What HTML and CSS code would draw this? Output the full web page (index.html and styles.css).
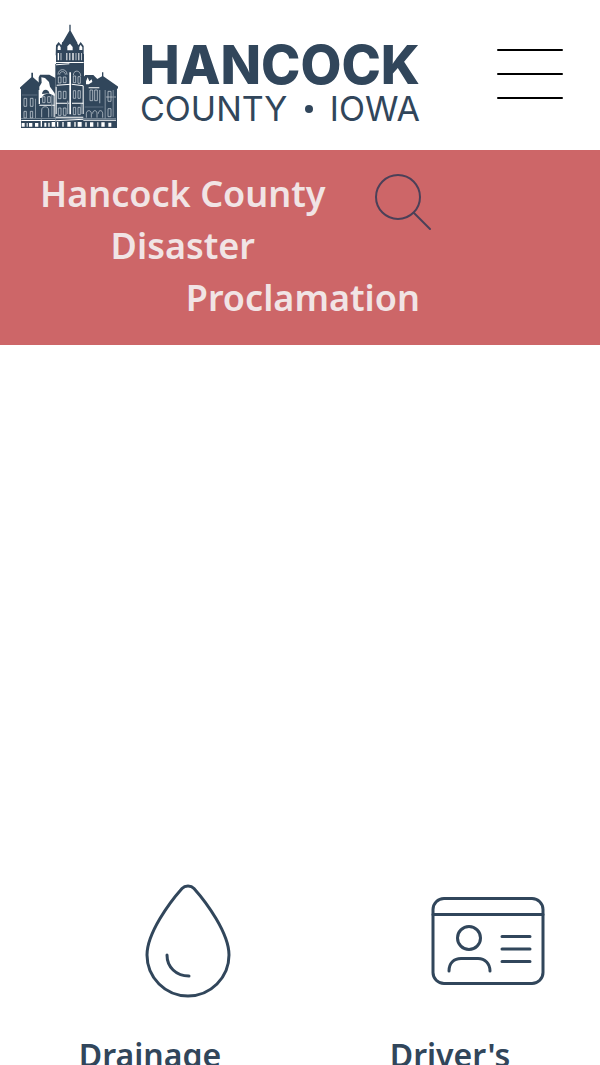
FILE: index.html
```html
<!DOCTYPE html>
<html lang="en">
<head>
<meta charset="utf-8">
<meta name="viewport" content="width=device-width, initial-scale=1">
<title>Hancock County, Iowa</title>
<link rel="stylesheet" href="styles.css">
</head>
<body>
<header class="site-header">
  <a class="brand" href="#" aria-label="Hancock County Iowa">
    <svg class="courthouse" viewBox="30 28 294 312" aria-hidden="true">
      <g fill="#31465b">
        <path d="M178 30h4v18l20 36-8 10h-28l-9-10 21-36z"/>
        <path d="M138 92l8-10 8 10 3-10h43l5 10 7-10 9 12v28h-84z"/>
        <path d="M138 118h84v50h-84z"/>
        <path d="M136 148l44-4 42 8v188h-86z"/>
        <path d="M28 220l36-32v-14h5v14l20 18v134H33V224z"/>
        <path d="M86 212v-24l4-8h28l18 10v150H86z"/>
        <path d="M220 188l6-7h24l12 12 14-8v-12h4v12l46 32-5 7v116H220z"/>
      </g>
      <g fill="#fff">
        <path d="M88 216l7-12-1-16 11 2 12 12 3 14 14 20v8l-18-8-14 4-8 10h-6z"/>
        <path d="M143 97l4-7 5 8v8h-9zm29-2l8-8 8 10v10h-16zm36 2l4-7 5 8v8h-9z"/>
        <path d="M143 115h4v22h-4zm9 0h2v22h-2zm17 0h3v22h-3zm9 0h3v22h-3zm9 0h4v22h-4zm10 0h2v22h-2zm8 0h3v22h-3zm9 0h2v22h-2z"/>
        <path d="M138 142h83v3h-83zm0 7l40-3v3l-40 3zm2 61l43-3v3l-43 3zm45-3l35 5v3l-35-5z"/>
        <path d="M178 173h5v126h-5zM137 216h3v82h-3zm81-2h3v84h-3z"/>
        <path d="M86 226h4v42h-4zM131 238h3v70h-3zM138 264h40v3h-40zm48 0h34v3h-34z"/>
        <path d="M228 200l5-12 5 12 7-6 2 8-11 7h-8z"/>
        <path d="M236 218h32v3h-32zm52 28h30v2h-30zM88 270h46v3H88z"/>
        <path d="M34 316h102v3H34zm103-10h83v3h-83zm0 11l83-5v3l-83 5zm83-2h98v3h-98z"/>
        <path d="M35 325h9v11h-9zm15 0h3v11h-3zm7 0h10v11H57zm18 0h10v11H75zm17-10h4v21h-4zm11 9h6v12h-6zm12 0h4v12h-4zm10-2h10v14h-10zm16 0h4v14h-4zm16 0h4v14h-4zm15 0h10v14h-10zm21 0h4v14h-4zm10 0h12v14h-12zm23 1h4v13h-4zm14 0h10v13h-10zm22 0h3v13h-3zm12 0h10v13h-10zm21 1h9v12h-9z"/>
      </g>
      <g fill="none" stroke="#d9e0e6" stroke-width="2">
        <path d="M144 180c0-20 27-20 27 0M149 180c0-12 17-12 17 0M190 182c0-18 22-16 22 2"/>
        <path d="M145 187h8v18h-8zm15 0h8v17h-8zM190 184h7v20h-7zm14 2h7v20h-7z"/>
        <path d="M145 230h8v22h-8zm15 0h8v22h-8zM190 228h7v23h-7zm14 0h7v23h-7zM145 280h8v22h-8zm15 0h8v22h-8zM190 278h7v22h-7zm14 0h7v22h-7z"/>
        <path d="M42 251h8v24h-8zm19 0h8v24h-8zM42 290h7v20h-7zm19 0h7v20h-7zM98 246h7v18h-7zm15 0h8v18h-8zM95 308v-22c0-13 21-13 21 0v22"/>
        <path d="M240 226h8v32h-8zm14 0h8v32h-8zM294 230h9v30h-9zM294 282h9v24h-9zM229 309v-12c0-12 15-12 15 0v12m4-12c0-12 13-12 13 0v12m4-12c0-12 13-12 13 0v12"/>
      </g>
      <path d="M96 238c1-17 20-17 22-2z" fill="#31465b"/>
      <g fill="#8795a3">
        <path d="M171 258h4v40h-4zM212 268h3v30h-3zM75 252h3v58h-3zM124 240h3v66h-3zM267 226h4v40h-4zM308 226h3v80h-3zM284 226h3v86h-3zM36 240h46v2H36zM224 276h56v2h-56zM33 311h285v2H33z"/>
      </g>
    </svg>
    <span class="wordmark">
      <span class="wordmark-name">HANCOCK</span>
      <span class="wordmark-place"><span>COUNTY</span><i class="dot"></i><span>IOWA</span></span>
    </span>
  </a>
  <button class="menu" type="button" aria-label="Menu"><span></span><span></span><span></span></button>
</header>
<section class="alert">
  <a class="alert-link" href="#">
    <span class="alert-start">Hancock County<br>Disaster</span>
    <span class="alert-end">Proclamation</span>
  </a>
  <button class="search" type="button" aria-label="Search">
    <svg viewBox="0 0 58 58" aria-hidden="true"><circle cx="24" cy="24" r="22"/><path d="M40 40l16 16"/></svg>
  </button>
</section>
<main>
  <div class="hero"></div>
  <nav class="services" aria-label="Services">
    <a class="service" href="#">
      <svg class="service-icon" viewBox="0 0 114 114" aria-hidden="true">
        <path d="M51 4.500C54 1.300 60 1.300 63 4.500C75 18 98 49 98 71A41 41 0 0 1 16 71C16 49 39 18 51 4.500Z"/>
        <path d="M36 71c0 12 9 21 22 21"/>
      </svg>
      <span>Drainage</span>
    </a>
    <a class="service" href="#">
      <svg class="service-icon" viewBox="0 0 114 114" aria-hidden="true">
        <rect x="2" y="14.500" width="110" height="85" rx="11"/>
        <path d="M2 30.500h110M71 52.500h28M71 65h28M71 77.500h28"/>
        <circle cx="38" cy="54" r="11.500"/>
        <path d="M18 87c0-8 5-12.500 12-12.500h17c7 0 12 5 12 12.500"/>
      </svg>
      <span>Driver's</span>
    </a>
  </nav>
</main>
</body>
</html>
```
FILE: styles.css
```css
* { box-sizing: border-box; }
body {
  margin: 0;
  background: #fff;
  color: #31465b;
  font-family: "Noto Sans", sans-serif;
}
a { color: inherit; text-decoration: none; }
button { border: 0; padding: 0; background: none; cursor: pointer; }
.site-header {
  display: flex;
  align-items: center;
  justify-content: space-between;
  height: 150px;
  padding: 0 37px 2px 20px;
}
.brand { display: flex; align-items: center; gap: 22px; padding-top: 4px; }
.courthouse { width: 98px; height: 104px; }
.wordmark {
  display: flex;
  flex-direction: column;
  font-family: Inter, sans-serif;
  padding-top: 14px;
}
.wordmark-name { font-size: 53px; line-height: 52px; font-weight: 800; }
.wordmark-place {
  display: flex;
  align-items: center;
  justify-content: space-between;
  font-size: 34px;
  line-height: 36px;
  font-weight: 400;
}
.dot { width: 8px; height: 8px; border-radius: 50%; background: #31465b; }
.menu {
  display: flex;
  flex-direction: column;
  gap: 22px;
  width: 66px;
}
.menu span { height: 2px; border-radius: 1px; background: #000; }
.alert {
  position: relative;
  padding: 18px 40px 21px;
  background: #cd6668;
}
.alert-link {
  display: flex;
  flex-direction: column;
  width: fit-content;
  min-width: 380px;
  color: #f1e4e5;
  font-size: 36px;
  line-height: 52px;
  font-weight: 600;
}
.alert-start { align-self: flex-start; text-align: center; }
.alert-end { align-self: flex-end; }
.search { position: absolute; left: 374px; top: 23px; width: 58px; height: 58px; }
.search svg { display: block; fill: none; stroke: #4b4058; stroke-width: 2; stroke-linecap: round; }
.hero { height: 539px; }
.services { display: grid; grid-template-columns: 1fr 1fr; }
.service {
  display: flex;
  flex-direction: column;
  align-items: center;
  gap: 34px;
  font-size: 32px;
  line-height: 46px;
  font-weight: 600;
}
.service-icon {
  width: 114px;
  height: 114px;
  margin-left: 75px;
  fill: none;
  stroke: #31465b;
  stroke-width: 3;
  stroke-linecap: round;
  stroke-linejoin: round;
}
```
